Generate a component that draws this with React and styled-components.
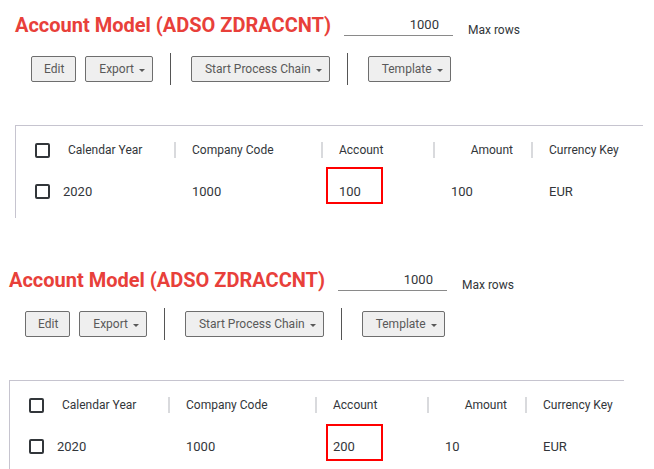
import React from 'react'
import styled, { createGlobalStyle } from 'styled-components'

const GlobalStyle = createGlobalStyle`
    body {
        margin: 0;
        background: #ffffff;
        font-family: Roboto, "Liberation Sans", Arial, sans-serif;
    }
`

const Page = styled.div`
    display: flex;
    flex-direction: column;
    gap: 47px;
    padding-top: 10px;
`

const Panel = styled.section`
    margin-left: ${props => props.left}px;
    display: flex;
    flex-direction: column;
`

const TitleRow = styled.div`
    display: flex;
    align-items: center;
    height: 30px;
`

const Title = styled.h1`
    margin: 0;
    font-size: 20px;
    line-height: 30px;
    font-weight: 700;
    color: #e8403a;
    white-space: nowrap;
`

const RowsInput = styled.div`
    margin-left: 13px;
    width: 95px;
    height: 21px;
    padding-right: 14px;
    border-bottom: 1px solid #8a8a8a;
    font-size: 13px;
    line-height: 21px;
    color: #32363a;
    text-align: right;
`

const RowsLabel = styled.span`
    margin-left: 15px;
    padding-top: 10px;
    font-size: 12px;
    color: #32363a;
`

const Toolbar = styled.div`
    display: flex;
    align-items: center;
    height: 32px;
    margin-top: 13px;
    padding-left: 16px;
    gap: 9px;
`

const Button = styled.button`
    display: flex;
    align-items: center;
    gap: 5px;
    height: 26px;
    padding: 0 ${props => props.dropdown ? '7px' : '11px'} 0 ${props => props.dropdown ? '13px' : '12px'};
    background: #efefef;
    border: 1px solid #6e6e6e;
    border-radius: 2px;
    font-family: Roboto, "Liberation Sans", Arial, sans-serif;
    font-size: 12px;
    color: #595959;
    cursor: pointer;
`

const Caret = styled.span`
    width: 0;
    height: 0;
    margin-top: 2px;
    border-left: 3px solid transparent;
    border-right: 3px solid transparent;
    border-top: 3px solid #595959;
`

const Divider = styled.span`
    width: 1px;
    height: 32px;
    background: #555555;
    margin: 0 11px 0 8px;
`

const Table = styled.div`
    position: relative;
    box-sizing: border-box;
    width: ${props => props.width}px;
    margin-top: 40px;
    border-top: 1px solid #c6c4cf;
    border-left: 1px solid #c6c4cf;
    padding-left: 19px;
    padding-bottom: 10px;
`

const Row = styled.div`
    display: grid;
    grid-template-columns: 15px 124px 147px 112px 98px 1fr;
    align-items: center;
    height: ${props => props.height}px;
`

const Checkbox = styled.span`
    box-sizing: border-box;
    width: 15px;
    height: 15px;
    border: 2px solid #32363a;
    border-radius: 2px;
    background: #ffffff;
`

const HeadCell = styled.div`
    display: flex;
    align-items: center;
    justify-content: ${props => props.right ? 'flex-end' : 'flex-start'};
    height: 16px;
    padding-left: ${props => props.first ? '18px' : '16px'};
    padding-right: ${props => props.right ? '18px' : '0'};
    border-left: ${props => props.first ? 'none' : '2px solid #d9dadd'};
    font-size: 12px;
    color: #32363a;
    white-space: nowrap;
`

const Cell = styled.div`
    padding-left: ${props => props.first ? '13px' : '18px'};
    font-size: 13px;
    color: #32363a;
`

const Highlight = styled.div`
    position: absolute;
    left: ${props => props.x}px;
    top: ${props => props.y}px;
    width: 57px;
    height: 37px;
    box-sizing: border-box;
    border: 2px solid #ff0000;
`

const AccountPanel = ({ left, tableWidth, account, amount, box }) => (
    <Panel left={left}>
        <TitleRow>
            <Title>Account Model (ADSO ZDRACCNT)</Title>
            <RowsInput>1000</RowsInput>
            <RowsLabel>Max rows</RowsLabel>
        </TitleRow>
        <Toolbar>
            <Button>Edit</Button>
            <Button dropdown>Export <Caret /></Button>
            <Divider />
            <Button dropdown>Start Process Chain <Caret /></Button>
            <Divider />
            <Button dropdown>Template <Caret /></Button>
        </Toolbar>
        <Table width={tableWidth}>
            <Row height={48}>
                <Checkbox />
                <HeadCell first>Calendar Year</HeadCell>
                <HeadCell>Company Code</HeadCell>
                <HeadCell>Account</HeadCell>
                <HeadCell right>Amount</HeadCell>
                <HeadCell>Currency Key</HeadCell>
            </Row>
            <Row height={34}>
                <Checkbox />
                <Cell first>2020</Cell>
                <Cell>1000</Cell>
                <Cell>{account}</Cell>
                <Cell>{amount}</Cell>
                <Cell>EUR</Cell>
            </Row>
            <Highlight x={box.x} y={box.y} />
        </Table>
    </Panel>
)

const App = () => {
  return (
    <Page>
        <GlobalStyle />
        <AccountPanel left={15} tableWidth={628} account="100" amount="100" box={{ x: 310, y: 41 }} />
        <AccountPanel left={9} tableWidth={615} account="200" amount="10" box={{ x: 316, y: 43 }} />
    </Page>
  )
}

export default App
